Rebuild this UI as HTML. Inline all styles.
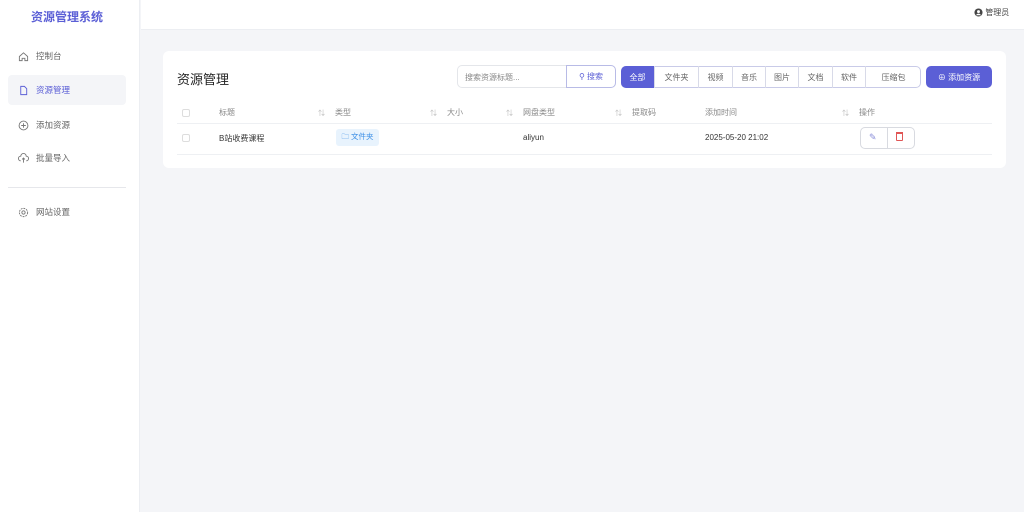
<!DOCTYPE html>
<html><head><meta charset="utf-8"><style>
*{box-sizing:border-box;margin:0;padding:0}
body{width:1024px;height:512px;overflow:hidden;background:#f4f5f8;font-family:"Liberation Sans","Noto Sans CJK SC",sans-serif;color:#333;position:relative}
.abs{position:absolute}
.side{left:0;top:0;width:140px;height:512px;background:#fff;border-right:1px solid #eceef2}
.logo{left:0;top:8px;width:134px;text-align:center;font-size:12px;font-weight:bold;color:#5b5fd6}
.item{left:8px;width:118px;height:30px;font-size:8.5px;color:#666;display:flex;align-items:center;padding-left:10px}
.item svg{margin-right:7px}
.hdr{left:141px;top:0;right:0;height:30px;background:#fff;border-bottom:1px solid #eceef2}
.card{left:163px;top:51px;width:843px;height:117px;background:#fff;border-radius:6px}
.t{font-size:8px;color:#888}
.seg{top:66px;height:22px;font-size:8px;color:#666;display:flex;align-items:center;justify-content:center;border-right:1px solid #d8dae8}
.line{left:177px;width:815px;height:1px;background:#eef0f3}
.cb{width:8px;height:8px;border:1px solid #ddd;border-radius:2px}
.so{font-size:7px;color:#bbb}
</style></head><body>
<div class="abs side"></div>
<div class="abs logo">资源管理系统</div>
<div class="abs item" style="top:41px"><svg width="11" height="11" viewBox="0 0 12 12" fill="none" stroke="#777" stroke-width="1"><path d="M1.5 6L6 2l4.5 4v4.5h-3V8h-3v2.5h-3z"/></svg>控制台</div>
<div class="abs item" style="top:75px;background:#f4f5f8;border-radius:4px;color:#5b5fd6"><svg width="11" height="11" viewBox="0 0 12 12" fill="none" stroke="#5b5fd6" stroke-width="1"><path d="M3 1.5h4l2.5 2.5v6.5H3z"/></svg>资源管理</div>
<div class="abs item" style="top:110px"><svg width="11" height="11" viewBox="0 0 12 12" fill="none" stroke="#777" stroke-width="1"><circle cx="6" cy="6" r="4.8"/><path d="M6 3.5v5M3.5 6h5"/></svg>添加资源</div>
<div class="abs item" style="top:143px"><svg width="11" height="11" viewBox="0 0 12 12" fill="none" stroke="#777" stroke-width="1"><path d="M3 8.5a2.5 2.5 0 010-5 3 3 0 016 0 2.5 2.5 0 010 5M6 10.5V5.5M4.5 7L6 5.5 7.5 7"/></svg>批量导入</div>
<div class="abs" style="left:8px;top:187px;width:118px;height:1px;background:#e6e7eb"></div>
<div class="abs item" style="top:197px"><svg width="11" height="11" viewBox="0 0 12 12" fill="none" stroke="#777" stroke-width="1"><circle cx="6" cy="6" r="1.8"/><circle cx="6" cy="6" r="4.5" stroke-dasharray="2 1"/></svg>网站设置</div>
<div class="abs hdr"></div>
<div class="abs" style="left:974px;top:7px;font-size:8px;color:#444;display:flex;align-items:center"><svg width="9" height="9" viewBox="0 0 10 10"><circle cx="5" cy="5" r="4.5" fill="#444"/><circle cx="5" cy="4" r="1.6" fill="#fff"/><path d="M2.3 8a3 3 0 015.4 0" fill="#fff"/></svg>&nbsp;管理员</div>
<div class="abs card"></div>
<div class="abs" style="left:177px;top:69px;font-size:13px;color:#222">资源管理</div>
<div class="abs" style="left:457px;top:65px;width:110px;height:23px;border:1px solid #e4e6ea;border-right:none;border-radius:5px 0 0 5px;font-size:8px;color:#888;padding:6px 7px">搜索资源标题...</div>
<div class="abs" style="left:566px;top:65px;width:50px;height:23px;border:1px solid #b8bbe6;border-radius:0 5px 5px 0;font-size:8px;color:#5b5fd6;display:flex;align-items:center;justify-content:center">⚲&nbsp;搜索</div>
<div class="abs" style="left:621px;top:66px;width:300px;height:22px;border:1px solid #c9cbe8;border-radius:5px"></div>
<div class="abs seg" style="left:621px;width:34px;background:#5b5fd6;color:#fff;border-radius:5px 0 0 5px">全部</div>
<div class="abs seg" style="left:655px;width:44px">文件夹</div>
<div class="abs seg" style="left:699px;width:34px">视频</div>
<div class="abs seg" style="left:733px;width:33px">音乐</div>
<div class="abs seg" style="left:766px;width:33px">图片</div>
<div class="abs seg" style="left:799px;width:34px">文档</div>
<div class="abs seg" style="left:833px;width:33px">软件</div>
<div class="abs seg" style="left:866px;width:55px;border-right:none">压缩包</div>
<div class="abs" style="left:926px;top:66px;width:66px;height:22px;background:#5b5fd6;border-radius:5px;color:#fff;font-size:8px;display:flex;align-items:center;justify-content:center">⊕&nbsp;添加资源</div>
<div class="abs cb" style="left:182px;top:109px"></div>
<div class="abs t" style="left:219px;top:107px">标题</div>
<div class="abs so" style="left:318px;top:108px">⇅</div>
<div class="abs t" style="left:335px;top:107px">类型</div>
<div class="abs so" style="left:430px;top:108px">⇅</div>
<div class="abs t" style="left:447px;top:107px">大小</div>
<div class="abs so" style="left:506px;top:108px">⇅</div>
<div class="abs t" style="left:523px;top:107px">网盘类型</div>
<div class="abs so" style="left:615px;top:108px">⇅</div>
<div class="abs t" style="left:632px;top:107px">提取码</div>
<div class="abs t" style="left:705px;top:107px">添加时间</div>
<div class="abs so" style="left:842px;top:108px">⇅</div>
<div class="abs t" style="left:859px;top:107px">操作</div>
<div class="abs line" style="top:123px"></div>
<div class="abs cb" style="left:182px;top:134px"></div>
<div class="abs" style="left:219px;top:133px;font-size:8px;color:#333">B站收费课程</div>
<div class="abs" style="left:336px;top:129px;width:43px;height:17px;background:#e8f3fd;border-radius:3px;font-size:7.5px;color:#3a8ee6;display:flex;align-items:center;justify-content:center">🗀&nbsp;文件夹</div>
<div class="abs" style="left:523px;top:133px;font-size:8px;color:#333">aliyun</div>
<div class="abs" style="left:705px;top:133px;font-size:8px;color:#333">2025-05-20 21:02</div>
<div class="abs" style="left:860px;top:127px;width:55px;height:22px;border:1px solid #d8dae0;border-radius:5px"></div>
<div class="abs" style="left:887px;top:128px;width:1px;height:20px;background:#d8dae0"></div>
<div class="abs" style="left:869px;top:132px;font-size:9px;color:#8a8ed9">✎</div>
<div class="abs" style="left:896px;top:132px;width:7px;height:9px;border:1.5px solid #e05656;border-top:2px solid #e05656;border-radius:0 0 1px 1px"></div>
<div class="abs line" style="top:154px"></div>
</body></html>
